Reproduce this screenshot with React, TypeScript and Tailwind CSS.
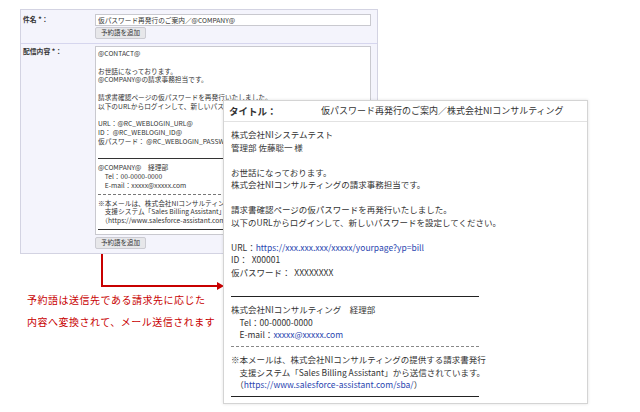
import React from 'react';

type Line = { t?: string; kind?: 'text' | 'solid' | 'dashed' | 'blank'; parts?: { s: string; link?: boolean }[] };

const leftLines: Line[] = [
  { t: '@CONTACT@' },
  { kind: 'blank' },
  { t: 'お世話になっております。' },
  { t: '@COMPANY@の請求事務担当です。' },
  { kind: 'blank' },
  { t: '請求書確認ページの仮パスワードを再発行いたしました。' },
  { t: '以下のURLからログインして、新しいパスワードを設定してください。' },
  { kind: 'blank' },
  { t: 'URL：@RC_WEBLOGIN_URL@' },
  { t: 'ID： @RC_WEBLOGIN_ID@' },
  { t: '仮パスワード： @RC_WEBLOGIN_PASSWORD@' },
  { kind: 'blank' },
  { kind: 'solid' },
  { t: '@COMPANY@　経理部' },
  { t: '　Tel：00-0000-0000' },
  { t: '　E-mail：xxxxx@xxxxx.com' },
  { kind: 'dashed' },
  { t: '※本メールは、株式会社NIコンサルティングの提供する請求書発行' },
  { t: '　支援システム「Sales Billing Assistant」から送信されています。' },
  { t: '　（https://www.salesforce-assistant.com/sba/）' },
  { kind: 'solid' },
];

const rightLines: Line[] = [
  { t: '株式会社NIシステムテスト' },
  { t: '管理部 佐藤聡一 様' },
  { kind: 'blank' },
  { t: 'お世話になっております。' },
  { t: '株式会社NIコンサルティングの請求事務担当です。' },
  { kind: 'blank' },
  { t: '請求書確認ページの仮パスワードを再発行いたしました。' },
  { t: '以下のURLからログインして、新しいパスワードを設定してください。' },
  { kind: 'blank' },
  { parts: [{ s: 'URL：' }, { s: 'https://xxx.xxx.xxx/xxxxx/yourpage?yp=bill', link: true }] },
  { t: 'ID：  X00001' },
  { t: '仮パスワード：  XXXXXXXX' },
  { kind: 'blank' },
  { kind: 'solid' },
  { t: '株式会社NIコンサルティング　経理部' },
  { t: '　Tel：00-0000-0000' },
  { parts: [{ s: '　E-mail：' }, { s: 'xxxxx@xxxxx.com', link: true }] },
  { kind: 'dashed' },
  { t: '※本メールは、株式会社NIコンサルティングの提供する請求書発行' },
  { t: '　支援システム「Sales Billing Assistant」から送信されています。' },
  { parts: [{ s: '　（' }, { s: 'https://www.salesforce-assistant.com/sba/', link: true }, { s: '）' }] },
  { kind: 'solid' },
];

function LeftLine({ line }: { line: Line }) {
  if (line.kind === 'solid')
    return (
      <div className="h-[8.8px] flex items-center">
        <div className="w-full border-t-[1.5px] border-[#333]" />
      </div>
    );
  if (line.kind === 'dashed')
    return (
      <div className="h-[8.8px] flex items-center">
        <div className="w-full border-t border-dashed border-[#777]" />
      </div>
    );
  if (line.kind === 'blank') return <div className="h-[8.8px]" />;
  return <div className="h-[8.8px] leading-[8.8px] whitespace-pre">{line.t}</div>;
}

function RightLine({ line }: { line: Line }) {
  if (line.kind === 'solid')
    return (
      <div className="h-[12.5px] flex items-center w-[248px]">
        <div className="w-full border-t-[1.5px] border-[#222]" />
      </div>
    );
  if (line.kind === 'dashed')
    return (
      <div className="h-[12.5px] flex items-center w-[248px]">
        <div className="w-full border-t border-dashed border-[#888]" />
      </div>
    );
  if (line.kind === 'blank') return <div className="h-[12.5px]" />;
  if (line.parts)
    return (
      <div className="h-[12.5px] leading-[12.5px] whitespace-pre">
        {line.parts.map((p, i) => (
          <span key={i} className={p.link ? 'text-[#2a46b0]' : ''}>
            {p.s}
          </span>
        ))}
      </div>
    );
  return <div className="h-[12.5px] leading-[12.5px] whitespace-pre">{line.t}</div>;
}

function AddButton() {
  return (
    <div className="w-[51px] h-[12px] flex items-center justify-center rounded-[2px] border border-[#cbcbd2] bg-[#e7e7ea] text-[6.5px] text-[#333]">
      予約語を追加
    </div>
  );
}

export default function App() {
  return (
    <div className="relative w-[640px] h-[412px] overflow-hidden bg-white text-[#333] font-['Noto_Sans_CJK_JP','Noto_Sans_CJK_SC',sans-serif]">
      {/* form panel */}
      <div className="ml-[20px] mt-[9px] w-[358px] h-[245px] border border-[#d3d3e2] bg-[#f4f4fc]">
        <div className="flex h-[34px] border-b border-[#d6d6ee]">
          <div className="w-[74px] pl-[2px] pt-[5px] text-[6.8px] font-bold leading-[9px]">件名 *：</div>
          <div className="flex flex-col gap-[1px] pt-[4px]">
            <div className="w-[276px] h-[12px] border border-[#c9c9cf] bg-white px-[2px] text-[6.7px] leading-[10px] whitespace-nowrap">
              仮パスワード再発行のご案内／@COMPANY@
            </div>
            <AddButton />
          </div>
        </div>
        <div className="flex">
          <div className="w-[74px] pl-[2px] pt-[3px] text-[6.8px] font-bold leading-[9px]">配信内容 *：</div>
          <div className="flex flex-col gap-[2px] pt-[2px]">
            <div className="w-[276px] h-[189px] border border-[#c9c9cf] bg-white pl-[2px] pr-[4px] pt-[2px] text-[6.7px] overflow-hidden">
              {leftLines.map((l, i) => (
                <LeftLine key={i} line={l} />
              ))}
            </div>
            <AddButton />
          </div>
        </div>
      </div>

      {/* note */}
      <div className="ml-[27px] mt-[35px] text-[10px] leading-[22px] tracking-[0.5px] text-[#c80000]">
        <div>予約語は送信先である請求先に応じた</div>
        <div>内容へ変換されて、メール送信されます</div>
      </div>

      {/* arrow */}
      <svg className="absolute left-[101px] top-[254px]" width="125" height="37" viewBox="0 0 125 37">
        <path d="M1 0 V32 H118" fill="none" stroke="#c80000" strokeWidth="2" />
        <polygon points="116,28 123,32 116,36" fill="#c80000" />
      </svg>

      {/* preview panel */}
      <div className="absolute left-[223px] top-[100px] w-[365px] h-[304px] border border-[#d4d4d4] bg-white shadow-[0_0_3px_rgba(0,0,0,0.12)]">
        <div className="flex items-center h-[21px] border-b border-[#e2e2e2] pl-[5px]">
          <div className="w-[92px] text-[9.5px] font-bold">タイトル：</div>
          <div className="text-[9px] whitespace-nowrap">仮パスワード再発行のご案内／株式会社NIコンサルティング</div>
        </div>
        <div className="pl-[7px] pt-[6px] text-[8.5px]">
          {rightLines.map((l, i) => (
            <RightLine key={i} line={l} />
          ))}
        </div>
      </div>
    </div>
  );
}
